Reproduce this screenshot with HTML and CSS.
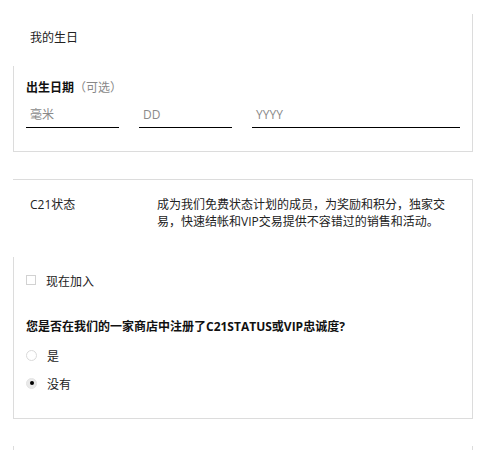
FILE: index.html
```html
<!DOCTYPE html>
<html lang="zh-CN">
<head>
<meta charset="utf-8">
<link rel="stylesheet" href="styles.css">
</head>
<body>
<div class="card card-birth">
  <div class="card-head">我的生日</div>
  <div class="card-body">
    <div class="field-label"><b>出生日期</b><span class="optional">（可选）</span></div>
    <div class="date-row">
      <div class="date-input short"><span class="ph">毫米</span></div>
      <div class="date-input short"><span class="ph">DD</span></div>
      <div class="date-input long"><span class="ph">YYYY</span></div>
    </div>
  </div>
</div>

<div class="card card-status">
  <div class="card-head status-head">
    <div class="status-title">C21状态</div>
    <div class="status-desc">成为我们免费状态计划的成员，为奖励和积分，独家交易，快速结帐和VIP交易提供不容错过的销售和活动。</div>
  </div>
  <div class="card-body status-body">
    <label class="option check-row"><span class="checkbox"></span><span>现在加入</span></label>
    <div class="question">您是否在我们的一家商店中注册了C21STATUS或VIP忠诚度?</div>
    <label class="option radio-row first"><span class="radio"></span><span>是</span></label>
    <label class="option radio-row"><span class="radio checked"></span><span>没有</span></label>
  </div>
</div>

<div class="card card-next"></div>
</body>
</html>
```

FILE: styles.css
```css
html, body {
  margin: 0;
  padding: 0;
  background: #fff;
}
body {
  font-family: "Open Sans", "Noto Sans CJK SC", sans-serif;
  font-size: 12px;
  line-height: 17px;
  color: #222;
}
.card {
  width: 460px;
  margin-left: 13px;
  box-sizing: border-box;
  border-right: 1px solid #dcdcdc;
  border-bottom: 1px solid #dcdcdc;
}
.card-birth {
  margin-top: 14px;
}
.card-head {
  height: 52px;
  box-sizing: border-box;
  padding: 15px 0 0 17px;
}
.card-body {
  border-left: 1px solid #dcdcdc;
  padding: 13px 12px 23px 12px;
}
.field-label b {
  font-weight: 700;
  color: #111;
}
.optional {
  color: #888;
}
.date-row {
  display: flex;
  gap: 20px;
  margin-top: 3px;
}
.date-input {
  height: 29px;
  box-sizing: border-box;
  border-bottom: 1px solid #000;
  padding: 7px 4px 0 4px;
}
.date-input.short { width: 93px; }
.date-input.long { flex: 1; padding-left: 4px; }
.ph {
  color: #8a8a8a;
}

.card-status {
  margin-top: 27px;
  border-top: 1px solid #dcdcdc;
}
.status-head {
  height: 77px;
  padding: 16px 0 0 17px;
  display: grid;
  grid-template-columns: 127px 292px;
  align-items: start;
}
.status-title {
  color: #222;
}
.status-desc {
  color: #222;
}
.status-body {
  padding: 16px 12px 25px 12px;
}
.option {
  display: flex;
  align-items: center;
  gap: 10px;
  height: 17px;
}
.checkbox {
  width: 10px;
  height: 10px;
  box-sizing: border-box;
  border: 1px solid #d2d2d2;
  background: #fff;
  margin-top: -3px;
}
.question {
  margin-top: 28px;
  font-weight: 700;
  color: #111;
}
.radio-row.first {
  margin-top: 13px;
}
.radio-row + .radio-row {
  margin-top: 11px;
}
.radio {
  width: 11px;
  height: 11px;
  box-sizing: border-box;
  border-radius: 50%;
  border: 1px solid #dadada;
  background: #fff;
  margin-top: -3px;
  display: flex;
  align-items: center;
  justify-content: center;
}
.radio.checked {
  background: #e9e9e9;
  border-color: #e4e4e4;
}
.radio.checked::after {
  content: "";
  width: 4px;
  height: 4px;
  border-radius: 50%;
  background: #000;
}

.card-next {
  margin-top: 27px;
  height: 4px;
  border-bottom: none;
  border-left: 1px solid #dcdcdc;
}
```
